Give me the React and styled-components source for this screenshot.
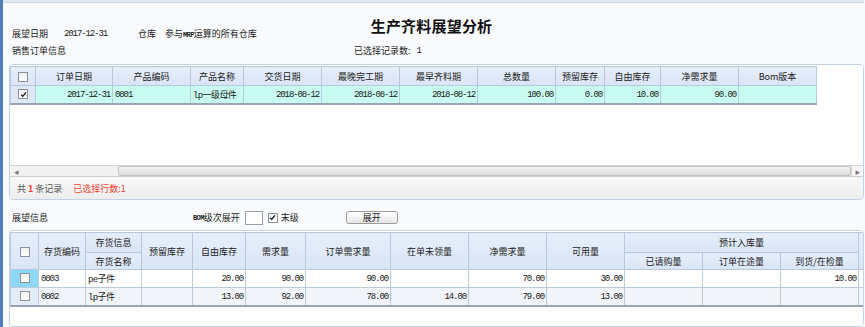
import React from "react";
import styled, { createGlobalStyle } from "styled-components";

const cjk = `"Noto Sans CJK SC", "Noto Sans", sans-serif`;
const mono = `"Liberation Mono", "Noto Sans CJK SC", monospace`;

const Global = createGlobalStyle`
  html, body { margin: 0; padding: 0; background: #f9fafd; }
  body { font-family: ${cjk}; color: #222; }
`;

const Window = styled.div`
  width: 865px;
  height: 327px;
  box-sizing: border-box;
  border-left: 3px solid #4f7db8;
  padding-right: 1px;
  overflow: hidden;
  display: flex;
  flex-direction: column;
  background: #f9fafd;
`;

const TopStrip = styled.div`
  height: 2px;
  flex: none;
  background: #dfe8f3;
  border-bottom: 1px solid #c9d7e8;
`;

const Title = styled.h1`
  margin: 12px 0 0;
  height: 16px;
  line-height: 16px;
  text-align: center;
  font: 700 15px ${cjk};
  color: #111;
  letter-spacing: 0.2px;
  padding-right: 4px;
`;

const InfoRow = styled.div`
  display: flex;
  align-items: center;
  height: 10px;
  margin-top: ${(p) => p.$mt}px;
  padding-left: 9px;
  font-size: 9px;
  line-height: 10px;
  color: #222;
  flex: none;
`;

const Label = styled.span`
  width: ${(p) => (p.$w ? `${p.$w}px` : "auto")};
  flex: none;
  white-space: nowrap;
`;

const Num = styled.span`
  font-family: ${mono};
  font-size: 9px;
  letter-spacing: -1.1px;
  width: ${(p) => (p.$w ? `${p.$w}px` : "auto")};
  flex: none;
`;

const Panel = styled.div`
  margin-left: 6px;
  margin-top: ${(p) => p.$mt}px;
  height: ${(p) => (p.$h ? `${p.$h}px` : "auto")};
  flex: ${(p) => (p.$h ? "none" : "1")};
  border: 1px solid #c4d2e3;
  border-radius: 4px;
  background: #fff;
  display: flex;
  flex-direction: column;
  overflow: hidden;
  box-sizing: border-box;
`;

const GridArea = styled.div`
  flex: 1;
  background: #fff;
  padding-top: 1px;
`;

const Grid = styled.table`
  border-collapse: collapse;
  table-layout: fixed;
  width: ${(p) => p.$w}px;
`;

const Col = styled.col`
  width: ${(p) => p.$w}px;
`;

const Th = styled.th`
  height: ${(p) => p.$h}px;
  padding: 0;
  background: linear-gradient(#e6eefa, #d9e5f6);
  border: 1px solid #b8c8dd;
  font: 400 9px ${cjk};
  color: #222;
  text-align: center;
  vertical-align: middle;
  white-space: nowrap;
  overflow: hidden;
`;

const Tr = styled.tr`
  background: ${(p) => p.$bg};
  &:last-child td {
    border-bottom: 2px solid #98a4b1;
  }
`;

const Td = styled.td`
  height: 17px;
  padding: 0 2px;
  border: 1px solid #bccbdc;
  text-align: ${(p) => p.$align || "left"};
  font-family: ${mono};
  font-size: 9px;
  letter-spacing: ${(p) => (p.$cjk ? "-0.6px" : "-1.1px")};
  color: #1a1a1a;
  white-space: nowrap;
  overflow: hidden;
  vertical-align: middle;
  background: ${(p) => p.$bg || "transparent"};
`;

const ChkCell = styled(Td)`
  text-align: center;
  padding: 0;
  background: ${(p) => p.$bg || "#dde8f7"};
`;

const Box = styled.span`
  display: inline-flex;
  align-items: center;
  justify-content: center;
  width: 8px;
  height: 8px;
  border: 1px solid #8d9299;
  background: linear-gradient(#f0f0f0, #ffffff);
  vertical-align: middle;
  svg {
    display: block;
  }
`;

const HScroll = styled.div`
  height: 12px;
  flex: none;
  display: flex;
  background: #f1f1f1;
  border-top: 1px solid #d4d4d4;
  border-bottom: 1px solid #cfcfcf;
  box-sizing: border-box;
`;

const Track = styled.div`
  width: ${(p) => p.$w}px;
  flex: none;
  display: flex;
  align-items: center;
  padding-left: 4px;
  font-size: 5px;
  color: #777;
  box-sizing: border-box;
`;

const Thumb = styled.div`
  flex: 1;
  border: 1px solid #c2c2c2;
  border-radius: 2px;
  background: linear-gradient(#f4f4f4, #dcdcdc);
`;

const ArrowBtn = styled.div`
  width: 11px;
  flex: none;
  display: flex;
  align-items: center;
  justify-content: center;
  font-size: 5px;
  color: #777;
  border-left: 1px solid #d6d6d6;
  background: #f6f6f6;
`;

const Footer = styled.div`
  height: 22px;
  flex: none;
  display: flex;
  align-items: center;
  padding-left: 7px;
  background: linear-gradient(#f8f8f8, #ededed);
  font-size: 9px;
  color: #555;
`;

const Red = styled.span`
  color: #f2402d;
  font-weight: ${(p) => (p.$bold ? 700 : 400)};
  margin: ${(p) => p.$m || "0"};
`;

const ToolRow = styled.div`
  display: flex;
  align-items: center;
  height: 15px;
  margin-top: 10px;
  padding-left: 9px;
  font-size: 9px;
  color: #222;
  flex: none;
`;

const SmallCaps = styled.span`
  font-family: ${mono};
  font-size: 7px;
  letter-spacing: -0.6px;
  font-weight: 700;
`;

const LevelInput = styled.div`
  width: 18px;
  height: 14px;
  border: 1px solid #9aa0a8;
  background: #fff;
  margin: 0 5px 0 5px;
  box-sizing: border-box;
  flex: none;
`;

const Button = styled.button`
  margin-left: ${(p) => p.$ml}px;
  width: 52px;
  height: 13px;
  padding: 0;
  border: 1px solid #9b9b9b;
  border-radius: 3px;
  background: linear-gradient(#ffffff, #e6e6e6);
  font: 400 9px ${cjk};
  line-height: 11px;
  color: #222;
`;

const Check = ({ on }) => (
  <Box>
    {on && (
      <svg width="7" height="7" viewBox="0 0 7 7">
        <path d="M1 3.6 L2.8 5.4 L6 1.4" fill="none" stroke="#111" strokeWidth="1.2" />
      </svg>
    )}
  </Box>
);

const topCols = [25, 77, 78, 53, 78, 78, 78, 78, 49, 56, 78, 78];
const topHeads = ["订单日期", "产品编码", "产品名称", "交货日期", "最晚完工期", "最早齐料期", "总数量", "预留库存", "自由库存", "净需求量", "Bom版本"];
const topRow = [
  ["2017-12-31", "right"],
  ["0801", "left"],
  ["lp一级母件", "left", true],
  ["2018-08-12", "right"],
  ["2018-08-12", "right"],
  ["2018-08-12", "right"],
  ["100.00", "right"],
  ["0.00", "right"],
  ["10.00", "right"],
  ["90.00", "right"],
  ["", "left"],
];

const botCols = [28, 47, 56, 51, 53, 60, 85, 78, 78, 78, 78, 78, 78, 5];
const botRows = [
  { chk: "#8dd7f7", bg: "#ffffff", cells: ["0803", "pe子件", "", "20.00", "90.00", "90.00", "", "70.00", "30.00", "", "", "10.00", ""] },
  { chk: "#e3ecf8", bg: "#f1f5fb", cells: ["0802", "lp子件", "", "13.00", "92.00", "78.00", "14.00", "79.00", "13.00", "", "", "", ""] },
];

export default function App() {
  return (
    <Window>
      <Global />
      <TopStrip />
      <Title>生产齐料展望分析</Title>
      <InfoRow $mt={-2}>
        <Label $w={52}>展望日期</Label>
        <Num $w={74}>2017-12-31</Num>
        <Label $w={27}>仓库</Label>
        <Label>
          参与<SmallCaps>MRP</SmallCaps>运算的所有仓库
        </Label>
      </InfoRow>
      <InfoRow $mt={7}>
        <Label $w={342}>销售订单信息</Label>
        <Label>已选择记录数:</Label>
        <Num style={{ marginLeft: 6 }}>1</Num>
      </InfoRow>

      <Panel $mt={8} $h={136}>
        <GridArea>
          <Grid $w={806}>
            <colgroup>
              {topCols.map((w, i) => (
                <Col key={i} $w={w} />
              ))}
            </colgroup>
            <thead>
              <tr>
                <Th $h={18}>
                  <Check />
                </Th>
                {topHeads.map((h) => (
                  <Th key={h} $h={18}>
                    {h}
                  </Th>
                ))}
              </tr>
            </thead>
            <tbody>
              <Tr $bg="#c9fcf1">
                <ChkCell>
                  <Check on />
                </ChkCell>
                {topRow.map(([v, a, c], i) => (
                  <Td key={i} $align={a} $cjk={c}>
                    {v}
                  </Td>
                ))}
              </Tr>
            </tbody>
          </Grid>
        </GridArea>
        <HScroll>
          <Track $w={108}>◀</Track>
          <Thumb />
          <ArrowBtn>▶</ArrowBtn>
        </HScroll>
        <Footer>
          共<Red $bold $m="0 2px">1</Red>条记录
          <Red $m="0 0 0 11px">已选择行数:1</Red>
        </Footer>
      </Panel>

      <ToolRow>
        <Label $w={181}>展望信息</Label>
        <SmallCaps>BOM</SmallCaps>
        <Label>级次展开</Label>
        <LevelInput />
        <Check on />
        <Label style={{ marginLeft: 3 }}>末级</Label>
        <Button $ml={47}>展开</Button>
      </ToolRow>

      <Panel $mt={5}>
        <GridArea>
          <Grid $w={853}>
            <colgroup>
              {botCols.map((w, i) => (
                <Col key={i} $w={w} />
              ))}
            </colgroup>
            <thead>
              <tr>
                <Th rowSpan={2} $h={19}>
                  <Check />
                </Th>
                <Th rowSpan={2}>存货编码</Th>
                <Th $h={19}>存货信息</Th>
                <Th rowSpan={2}>预留库存</Th>
                <Th rowSpan={2}>自由库存</Th>
                <Th rowSpan={2}>需求量</Th>
                <Th rowSpan={2}>订单需求量</Th>
                <Th rowSpan={2}>在单未领量</Th>
                <Th rowSpan={2}>净需求量</Th>
                <Th rowSpan={2}>可用量</Th>
                <Th colSpan={3}>预计入库量</Th>
                <Th rowSpan={2} />
              </tr>
              <tr>
                <Th $h={16}>存货名称</Th>
                <Th>已请购量</Th>
                <Th>订单在途量</Th>
                <Th>到货/在检量</Th>
              </tr>
            </thead>
            <tbody>
              {botRows.map((r) => (
                <Tr key={r.cells[0]} $bg={r.bg}>
                  <ChkCell $bg={r.chk}>
                    <Check />
                  </ChkCell>
                  {r.cells.map((v, i) => (
                    <Td key={i} $align={i < 2 ? "left" : "right"} $cjk={i === 1}>
                      {v}
                    </Td>
                  ))}
                </Tr>
              ))}
            </tbody>
          </Grid>
        </GridArea>
      </Panel>
    </Window>
  );
}
